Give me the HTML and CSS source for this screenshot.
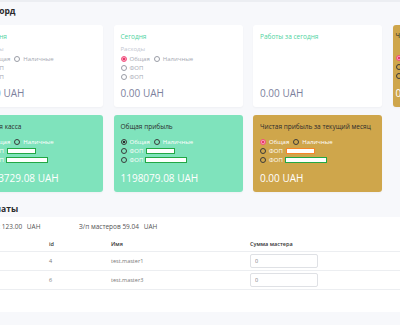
FILE: index.html
```html
<!DOCTYPE html>
<html lang="ru">
<head>
    <meta charset="UTF-8">
    <meta name="viewport" content="width=device-width, initial-scale=1.0">
    <title>Дашборд</title>
    <link rel="stylesheet" href="styles.css">
</head>
<body>
    <div class="page">
        <h1 class="page-title">Дашборд</h1>

        <div class="cards">
            <div class="card card-white">
                <div class="card-title accent">Сегодня</div>
                <div class="card-label">Доходы</div>
                <div class="radio-row">
                    <span class="radio checked-pink"></span><span class="radio-text">Общая</span>
                    <span class="radio"></span><span class="radio-text">Наличные</span>
                </div>
                <div class="radio-row"><span class="radio"></span><span class="radio-text">ФОП</span></div>
                <div class="radio-row"><span class="radio"></span><span class="radio-text">ФОП</span></div>
                <div class="card-amount">0.00 UAH</div>
            </div>

            <div class="card card-white">
                <div class="card-title accent">Сегодня</div>
                <div class="card-label">Расходы</div>
                <div class="radio-row">
                    <span class="radio checked-pink"></span><span class="radio-text">Общая</span>
                    <span class="radio"></span><span class="radio-text">Наличные</span>
                </div>
                <div class="radio-row"><span class="radio"></span><span class="radio-text">ФОП</span></div>
                <div class="radio-row"><span class="radio"></span><span class="radio-text">ФОП</span></div>
                <div class="card-amount">0.00 UAH</div>
            </div>

            <div class="card card-white">
                <div class="card-title accent">Работы за сегодня</div>
                <div class="card-amount">0.00 UAH</div>
            </div>

            <div class="card card-gold card-narrow">
                <div class="card-title">Чистая прибыль</div>
                <div class="card-label">&nbsp;</div>
                <div class="radio-row"><span class="radio checked-pink"></span><span class="radio-text">Общая</span></div>
                <div class="radio-row"><span class="radio"></span><span class="radio-text">ФОП</span></div>
                <div class="radio-row"><span class="radio"></span><span class="radio-text">ФОП</span></div>
                <div class="card-amount">0.00 UAH</div>
            </div>
        </div>

        <div class="cards">
            <div class="card card-green">
                <div class="card-title">Общая касса</div>
                <div class="radio-group">
                    <div class="radio-row">
                        <span class="radio checked-dark"></span><span class="radio-text">Общая</span>
                        <span class="radio"></span><span class="radio-text">Наличные</span>
                    </div>
                    <div class="radio-row"><span class="radio"></span><span class="radio-text">ФОП</span><span class="mark mark-green mark-short"></span></div>
                    <div class="radio-row"><span class="radio"></span><span class="radio-text">ФОП</span><span class="mark mark-green mark-long"></span></div>
                </div>
                <div class="card-amount">1183729.08 UAH</div>
            </div>

            <div class="card card-green">
                <div class="card-title">Общая прибыль</div>
                <div class="radio-group">
                    <div class="radio-row">
                        <span class="radio checked-dark"></span><span class="radio-text">Общая</span>
                        <span class="radio"></span><span class="radio-text">Наличные</span>
                    </div>
                    <div class="radio-row"><span class="radio"></span><span class="radio-text">ФОП</span><span class="mark mark-green mark-short"></span></div>
                    <div class="radio-row"><span class="radio"></span><span class="radio-text">ФОП</span><span class="mark mark-green mark-long"></span></div>
                </div>
                <div class="card-amount">1198079.08 UAH</div>
            </div>

            <div class="card card-gold">
                <div class="card-title">Чистая прибыль за текущий месяц</div>
                <div class="radio-group">
                    <div class="radio-row">
                        <span class="radio checked-pink"></span><span class="radio-text">Общая</span>
                        <span class="radio"></span><span class="radio-text">Наличные</span>
                    </div>
                    <div class="radio-row"><span class="radio"></span><span class="radio-text">ФОП</span><span class="mark mark-orange mark-short"></span></div>
                    <div class="radio-row"><span class="radio"></span><span class="radio-text">ФОП</span><span class="mark mark-green mark-long"></span></div>
                </div>
                <div class="card-amount">0.00 UAH</div>
            </div>
        </div>

        <h2 class="section-title">Зарплаты</h2>

        <div class="panel">
            <div class="summary">
                <div class="summary-item">Касса: <span class="sum">123.00</span> UAH</div>
                <div class="summary-item">З/п мастеров <span class="sum">59.04</span> UAH</div>
            </div>

            <table class="masters">
                <thead>
                    <tr>
                        <th class="col-check">#</th>
                        <th class="col-id">id</th>
                        <th class="col-name">Имя</th>
                        <th>Сумма мастера</th>
                    </tr>
                </thead>
                <tbody>
                    <tr>
                        <td class="col-check">1</td>
                        <td class="col-id">4</td>
                        <td class="col-name">test.master1</td>
                        <td><input class="sum-input" type="text" value="0"></td>
                    </tr>
                    <tr>
                        <td class="col-check">2</td>
                        <td class="col-id">6</td>
                        <td class="col-name">test.master3</td>
                        <td><input class="sum-input" type="text" value="0"></td>
                    </tr>
                </tbody>
            </table>
        </div>
    </div>
</body>
</html>
```

FILE: styles.css
```css
body {
    margin: 0;
    background-color: #f7f8fb;
    border-top: 2px solid #eceef2;
    font-family: "Open Sans", "Noto Sans", sans-serif;
    color: #333;
    overflow: hidden;
    height: 323px;
}
.page {
    margin-left: -26px;
    width: 560px;
}
.page-title {
    margin: 0;
    padding: 4px 0 0 0;
    font-size: 8.5px;
    line-height: 9px;
    font-weight: 700;
    color: #2a2a2a;
    height: 19px;
}
.cards {
    display: flex;
    gap: 10.5px;
    margin-bottom: 8px;
}
.card {
    width: 129px;
    flex: none;
    box-sizing: border-box;
    padding: 7px 7px 8px;
    border-radius: 3px;
    display: flex;
    flex-direction: column;
    box-shadow: 0 1px 2px rgba(40, 50, 80, 0.04);
}
.cards:first-of-type .card {
    height: 82px;
}
.cards + .cards .card {
    height: 77px;
}
.card-white {
    background-color: #fff;
}
.card-green {
    background-color: #7fe3bc;
}
.card-gold {
    background-color: #cfa64b;
}
.card-narrow {
    padding-left: 3px;
    padding-top: 6px;
}
.card-title {
    font-size: 6.5px;
    line-height: 9px;
    color: #2b2b2b;
    white-space: nowrap;
}
.card-title.accent {
    color: #4fd3a0;
}
.card-label {
    margin-top: 4px;
    font-size: 6px;
    line-height: 9px;
    color: #c2c5cf;
}
.radio-group {
    margin-top: 6.5px;
}
.radio-row {
    display: flex;
    align-items: center;
    height: 9px;
    font-size: 6px;
    white-space: nowrap;
}
.radio {
    width: 4px;
    height: 4px;
    border: 1px solid #9a9da6;
    border-radius: 50%;
    flex: none;
    margin-right: 3px;
}
.radio-text + .radio {
    margin-left: 4px;
}
.radio-text {
    color: #a5a8b2;
}
.card-green .radio,
.card-gold .radio {
    border-color: #3a3a3a;
}
.card-green .radio-text,
.card-gold .radio-text {
    color: #fff;
}
.radio.checked-pink {
    border-color: #f2517f;
    background: radial-gradient(circle, #e9386a 0 1.2px, #f9a5bd 1.6px);
}
.radio.checked-dark {
    background: radial-gradient(circle, #2b2b2b 0 1.2px, transparent 1.6px);
}
.mark {
    display: inline-block;
    height: 4px;
    margin-left: 3px;
    background-color: #fff;
    border: 1px solid #22a845;
    flex: none;
}
.mark-short {
    width: 27px;
}
.mark-long {
    width: 40px;
    margin-left: 2px;
}
.mark-orange {
    border-color: #f5862a;
}
.card-amount {
    margin-top: auto;
    font-size: 10px;
    line-height: 12px;
    color: #7d819d;
    white-space: nowrap;
}
.card-green .card-amount,
.card-gold .card-amount {
    color: #fff;
}
.section-title {
    margin: 0;
    padding: 4px 0 0 0;
    height: 13px;
    font-size: 8.5px;
    line-height: 9px;
    font-weight: 700;
    color: #2a2a2a;
}
.panel {
    background-color: #fff;
    height: 95px;
}
.summary {
    display: grid;
    grid-template-columns: 98px auto;
    padding: 5px 0 0 7px;
    font-size: 6.5px;
    line-height: 9px;
    color: #555;
}
.sum {
    margin-right: 3px;
}
.masters {
    border-collapse: collapse;
    width: 100%;
    margin-top: 5px;
    font-size: 5.5px;
}
.masters th {
    text-align: left;
    font-weight: 600;
    color: #333;
    height: 15px;
    padding: 0;
    border-bottom: 1px solid #eceef1;
}
.masters td {
    height: 18px;
    padding: 0;
    color: #777;
    border-bottom: 1px solid #eceef1;
}
.masters .col-check {
    width: 68px;
    padding-left: 7px;
    color: transparent;
}
.masters .col-id {
    width: 62px;
}
.masters .col-name {
    width: 139px;
}
.sum-input {
    display: block;
    box-sizing: border-box;
    width: 68px;
    height: 14px;
    padding: 0 4px;
    border: 1px solid #dfe1e5;
    border-radius: 2px;
    font-family: inherit;
    font-size: 5.5px;
    color: #777;
}
```
